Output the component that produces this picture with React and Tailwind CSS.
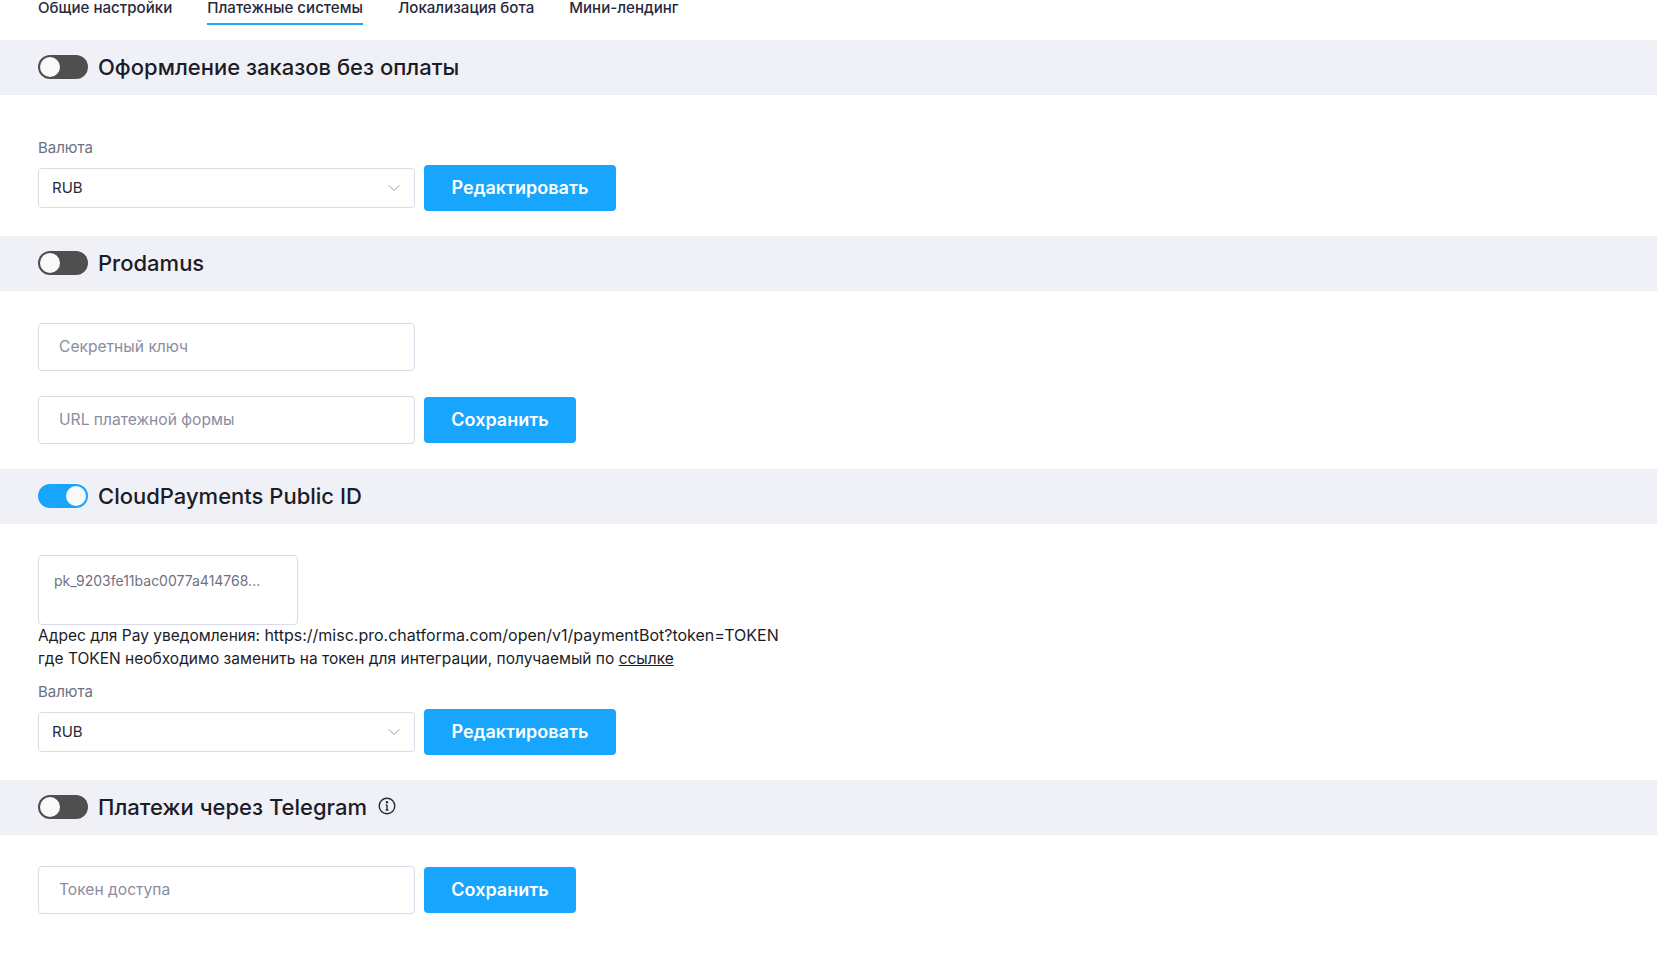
import { ChevronDown } from 'lucide-react'

const font = { fontFamily: 'Inter, "Noto Sans", sans-serif' }

function Toggle({ on }) {
  if (on) {
    return (
      <div className="mb-[1px] flex h-6 w-[50px] shrink-0 items-center justify-end rounded-full bg-[#18a5fd] pr-[2px]">
        <div className="h-5 w-5 rounded-full bg-[#f9f9f9]" />
      </div>
    )
  }
  return (
    <div className="mb-[1px] flex h-6 w-[50px] shrink-0 items-center rounded-full bg-[#4f4f4f] pl-[2px]">
      <div className="h-5 w-5 rounded-full bg-[#f9f9f9]" />
    </div>
  )
}

function Band({ title, on, info }) {
  return (
    <div className="flex h-[55px] items-center bg-[#f0f1f7] pl-[38px]">
      <Toggle on={on} />
      <h2 className="ml-[10px] text-[22px] font-medium text-[#1c1c28]">{title}</h2>
      {info && (
        <svg className="ml-[11px] mb-[3px]" width="18" height="18" viewBox="0 0 18 18" fill="none" stroke="#2a2a3c" strokeWidth="1.4">
          <circle cx="9" cy="9" r="7.8" />
          <path d="M9 8v5M7.6 13h2.8M7.8 8H9" />
          <circle cx="9" cy="5.2" r="0.6" fill="#2a2a3c" />
        </svg>
      )}
    </div>
  )
}

function Btn({ children, wide }) {
  return (
    <button className={`ml-[9px] h-[46px] rounded-[4px] bg-[#18a5fd] pb-[1px] text-[18px] font-semibold text-white ${wide ? 'w-[192px]' : 'w-[152px]'}`}>
      {children}
    </button>
  )
}

function TextBox({ placeholder }) {
  return (
    <div className="flex h-12 w-[377px] items-center rounded-[4px] border border-[#dadbe8] bg-white pl-5 text-[15.6px] text-[#8c8ca1]">
      {placeholder}
    </div>
  )
}

function CurrencyRow() {
  return (
    <div>
      <div className="mb-[7px] text-[15px] leading-5 text-[#6b7183]">Валюта</div>
      <div className="flex items-center">
        <div className="flex h-10 w-[377px] items-center justify-between rounded-[4px] border border-[#dadbe8] bg-white pl-[13px] pr-[10px] text-[15px] text-[#28293d]">
          RUB
          <ChevronDown size={20} strokeWidth={1} color="#8c8ca1" />
        </div>
        <Btn wide>Редактировать</Btn>
      </div>
    </div>
  )
}

export default function App() {
  const tabs = ['Общие настройки', 'Платежные системы', 'Локализация бота', 'Мини-лендинг']
  return (
    <div className="h-[967px] overflow-hidden bg-white" style={font}>
      <nav className="flex h-[40px] gap-[35px] pl-[38px] text-[15.1px] font-medium text-[#28293d]">
        {tabs.map((t, i) => (
          <div key={t} className={`h-[25px] leading-[15px] ${i === 1 ? 'border-b-2 border-[#18a5fd]' : ''}`}>{t}</div>
        ))}
      </nav>

      <Band title="Оформление заказов без оплаты" />
      <section className="h-[141px] pl-[38px] pt-[43px]">
        <CurrencyRow />
      </section>

      <Band title="Prodamus" />
      <section className="h-[178px] pl-[38px] pt-[32px]">
        <TextBox placeholder="Секретный ключ" />
        <div className="mt-[25px] flex items-center">
          <TextBox placeholder="URL платежной формы" />
          <Btn>Сохранить</Btn>
        </div>
      </section>

      <Band title="CloudPayments Public ID" on />
      <section className="h-[256px] pl-[38px] pt-[31px]">
        <div className="h-[70px] w-[260px] rounded-[4px] border border-[#dadbe8] bg-white pl-[15px] pt-[15px] text-[14px] leading-5 text-[#6f7183]">
          pk_9203fe11bac0077a414768...
        </div>
        <p className="mb-[12px] -mt-[1px] text-[15.5px] leading-[23px] text-[#1c1c28]">
          Адрес для Pay уведомления: <span className="text-[16px]">https://misc.pro.chatforma.com/open/v1/paymentBot?token=TOKEN</span>
          <br />
          где TOKEN необходимо заменить на токен для интеграции, получаемый по <a className="underline">ссылке</a>
        </p>
        <CurrencyRow />
      </section>

      <Band title="Платежи через Telegram" info />
      <section className="pl-[38px] pt-[31px]">
        <div className="flex items-center">
          <TextBox placeholder="Токен доступа" />
          <Btn>Сохранить</Btn>
        </div>
      </section>
    </div>
  )
}
